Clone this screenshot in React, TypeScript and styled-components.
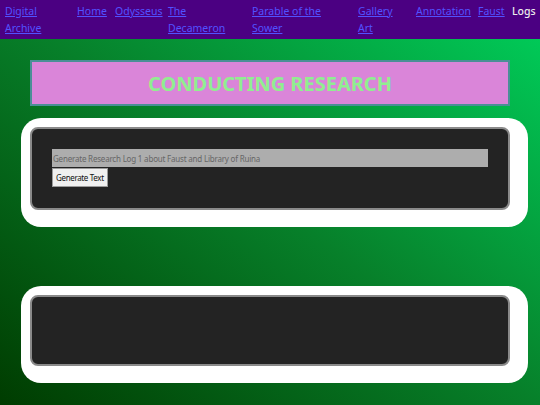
import styled, { createGlobalStyle } from 'styled-components';

const GlobalStyle = createGlobalStyle`
  html, body {
    margin: 0;
    padding: 0;
  }
  body {
    min-height: 405px;
    font-family: 'Noto Sans', 'Open Sans', sans-serif;
    background: linear-gradient(to top right, #003c00 0%, #07802a 50%, #00d15c 100%);
  }
`;

const NavBar = styled.nav`
  background: #4b0082;
  padding: 3px 5px 2px;
`;

const NavList = styled.ul`
  display: flex;
  gap: 8px;
  margin: 0;
  padding: 0;
  list-style: none;
  font-size: 10.5px;
  line-height: 17px;
`;

const NavItem = styled.li<{ $width?: number }>`
  flex: ${(p) => (p.$width ? `0 0 ${p.$width}px` : '0 0 auto')};
  min-width: 0;
  white-space: ${(p) => (p.$width ? 'normal' : 'nowrap')};
`;

const NavLink = styled.a<{ $current?: boolean }>`
  color: ${(p) => (p.$current ? '#ececec' : '#5252ff')};
  font-weight: ${(p) => (p.$current ? 500 : 400)};
  text-decoration: ${(p) => (p.$current ? 'none' : 'underline')};
`;

const Main = styled.main`
  padding: 21px 30px 20px;
`;

const Title = styled.h1`
  margin: 0;
  height: 46px;
  box-sizing: border-box;
  display: flex;
  align-items: center;
  justify-content: center;
  background: #da85d9;
  border: 2px solid #4a8f96;
  color: #90ee90;
  font-size: 20px;
  font-weight: 700;
`;

const Card = styled.section<{ $gap: number }>`
  margin: ${(p) => p.$gap}px -18px 0 -9px;
  padding: 9px 18px 17px 9px;
  background: #ffffff;
  border-radius: 20px;
`;

const Panel = styled.div<{ $minHeight?: number }>`
  box-sizing: border-box;
  min-height: ${(p) => p.$minHeight ?? 0}px;
  padding: 20px 20px 21px;
  background: #232323;
  border: 2px solid #8a8a8a;
  border-radius: 8px;
`;

const PromptInput = styled.input`
  display: block;
  box-sizing: border-box;
  width: 100%;
  height: 18px;
  margin: 0 0 1px;
  padding: 0 1px;
  border: none;
  background: #adadad;
  font-family: inherit;
  font-size: 8px;
  letter-spacing: -0.2px;
  color: #333;
  &::placeholder {
    color: #666;
  }
`;

const GenerateButton = styled.button`
  display: block;
  height: 19px;
  padding: 0 3px;
  background: #f0f0f0;
  border: 1px solid #9a9a9a;
  font-family: inherit;
  font-size: 8px;
  letter-spacing: -0.35px;
  color: #111;
`;

const links: { label: string; width: number }[] = [
  { label: 'Digital Archive', width: 64 },
  { label: 'Home', width: 30 },
  { label: 'Odysseus', width: 45 },
  { label: 'The Decameron', width: 76 },
  { label: 'Parable of the Sower', width: 98 },
  { label: 'Gallery Art', width: 50 },
  { label: 'Annotation', width: 54 },
  { label: 'Faust', width: 26 },
];

export default function App() {
  return (
    <>
      <GlobalStyle />
      <NavBar>
        <NavList>
          {links.map((l) => (
            <NavItem key={l.label} $width={l.width}>
              <NavLink href="#">{l.label}</NavLink>
            </NavItem>
          ))}
          <NavItem>
            <NavLink $current>Logs</NavLink>
          </NavItem>
        </NavList>
      </NavBar>
      <Main>
        <Title>CONDUCTING RESEARCH</Title>
        <Card $gap={12}>
          <Panel>
            <PromptInput placeholder="Generate Research Log 1 about Faust and Library of Ruina" />
            <GenerateButton type="button">Generate Text</GenerateButton>
          </Panel>
        </Card>
        <Card $gap={59}>
          <Panel $minHeight={71} />
        </Card>
      </Main>
    </>
  );
}
